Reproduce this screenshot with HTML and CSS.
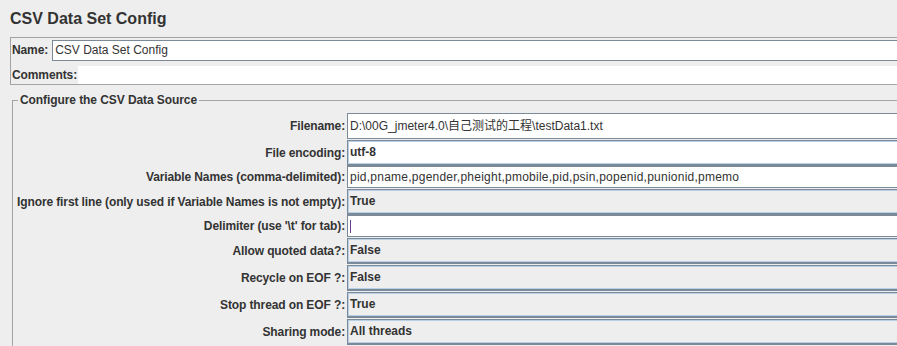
FILE: index.html
```html
<!DOCTYPE html>
<html lang="en">
  <head>
    <meta charset="UTF-8" />
    <title>CSV Data Set Config</title>
    <link rel="stylesheet" href="styles.css">
  </head>
  <body>
    <div class="title">CSV Data Set Config</div>

    <!-- nome e comentarios -->
    <div class="name-panel">
      <div class="name-row">
        <span class="lbl">Name:</span>
        <div class="text-field">CSV Data Set Config</div>
      </div>
      <div class="comments-row">
        <span class="lbl">Comments:</span>
        <div class="comments-area"></div>
      </div>
    </div>

    <fieldset class="source">
      <legend>Configure the CSV Data Source</legend>
      <div class="form-grid">
        <span class="lbl">Filename:</span>
        <div class="field text tall">D:\00G_jmeter4.0\自己测试的工程\testData1.txt</div>

        <span class="lbl">File encoding:</span>
        <div class="field combo editable">utf-8</div>

        <span class="lbl">Variable Names (comma-delimited):</span>
        <div class="field text spaced">pid,pname,pgender,pheight,pmobile,pid,psin,popenid,punionid,pmemo</div>

        <span class="lbl">Ignore first line (only used if Variable Names is not empty):</span>
        <div class="field combo">True</div>

        <span class="lbl">Delimiter (use '\t' for tab):</span>
        <div class="field text"><span class="caret"></span></div>

        <span class="lbl">Allow quoted data?:</span>
        <div class="field combo">False</div>

        <span class="lbl">Recycle on EOF ?:</span>
        <div class="field combo">False</div>

        <span class="lbl">Stop thread on EOF ?:</span>
        <div class="field combo">True</div>

        <span class="lbl">Sharing mode:</span>
        <div class="field combo">All threads</div>
      </div>
    </fieldset>
  </body>
</html>
```

FILE: styles.css
```css
* {
  padding: 0;
  margin: 0;
  box-sizing: border-box;
  font-family: "Liberation Sans", Arial, "Noto Sans CJK SC", sans-serif;
}

body {
  background-color: #eeeeee;
  color: #333333;
  font-size: 12px;
  overflow: hidden;
}

.title {
  height: 37px;
  line-height: 38px;
  padding-left: 10px;
  font-size: 16px;
  font-weight: bold;
}

.lbl {
  font-weight: bold;
  white-space: nowrap;
  letter-spacing: -0.11px;
}

/* painel Name / Comments */
.name-panel {
  margin-left: 10px;
  margin-right: -20px;
  border: 1px solid #a3a3a3;
  height: 48px;
}

.name-row {
  display: flex;
  align-items: center;
  gap: 4px;
  padding: 1px 0 0 1px;
  height: 23px;
}

.text-field {
  flex: 1;
  height: 21px;
  line-height: 19px;
  background-color: #ffffff;
  border: 1px solid #7a8a99;
  border-right: none;
  padding-left: 2px;
}

.comments-row {
  display: flex;
  align-items: center;
  gap: 1px;
  margin-top: 5px;
  padding-left: 1px;
  height: 18px;
}

.comments-area {
  flex: 1;
  height: 18px;
  background-color: #ffffff;
}

/* grupo CSV Data Source */
.source {
  margin: 8px -20px 0 12px;
  border: 1px solid #a3a3a3;
  border-bottom: none;
  padding: 6px 0 10px 4px;
  height: 260px;
}

.source legend {
  margin-left: 1px;
  padding: 0 2px;
  font-size: 12px;
  font-weight: bold;
  letter-spacing: -0.08px;
}

.form-grid {
  display: grid;
  grid-template-columns: auto 1fr;
  column-gap: 2px;
  align-items: center;
}

.form-grid .lbl {
  text-align: right;
}

.field {
  height: 26px;
  line-height: 23px;
  padding-left: 2px;
  border: 1px solid #7a8a99;
  border-right: none;
  white-space: nowrap;
  overflow: hidden;
}

.field.text {
  height: 22px;
  line-height: 20px;
  background-color: #ffffff;
}

.field.text.tall {
  height: 26px;
  line-height: 24px;
}

.field.text.spaced {
  letter-spacing: 0.24px;
}

.field.combo {
  margin-top: 1px;
  background-color: #eeeeee;
  font-weight: bold;
  box-shadow: inset 1px 1px 0 #b8cfe5, inset 0 -1px 0 #b8cfe5;
  border-bottom-width: 2px;
}

.field.combo.editable {
  background-color: #ffffff;
}

.caret {
  display: inline-block;
  width: 1px;
  height: 13px;
  vertical-align: middle;
  background-color: #6b3f8f;
}
```
